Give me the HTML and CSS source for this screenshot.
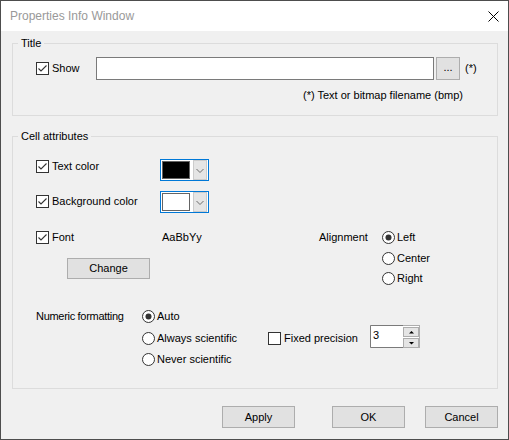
FILE: index.html
```html
<!DOCTYPE html>
<html lang="en">
<head>
<meta charset="utf-8">
<title>Properties Info Window</title>
<link rel="stylesheet" href="styles.css">
</head>
<body>
<div class="window">
  <div class="titlebar">
    <span class="title">Properties Info Window</span>
    <svg class="close" width="11" height="11" viewBox="0 0 11 11"><path d="M0.5 0.5 L10.5 10.5 M10.5 0.5 L0.5 10.5" stroke="#000" stroke-width="1" fill="none"/></svg>
  </div>

  <div class="content">
    <div class="group title-group">
      <span class="group-label">Title</span>
      <div class="show-row">
        <label class="check show-check">
          <span class="box"><svg width="11" height="11" viewBox="0 0 11 11"><polyline points="1.5,5.5 4,8 9.5,2.5" fill="none" stroke="#333" stroke-width="1.1"/></svg></span>
          <span>Show</span>
        </label>
        <div class="textfield"></div>
        <div class="btn browse">...</div>
        <span class="footnote">(*)</span>
      </div>
      <div class="note">(*) Text or bitmap filename (bmp)</div>
    </div>

    <div class="group cell-group">
      <span class="group-label">Cell attributes</span>

      <div class="color-row">
        <label class="check">
          <span class="box"><svg width="11" height="11" viewBox="0 0 11 11"><polyline points="1.5,5.5 4,8 9.5,2.5" fill="none" stroke="#333" stroke-width="1.1"/></svg></span>
          <span>Text color</span>
        </label>
        <div class="combo">
          <span class="swatch swatch-black"></span>
          <span class="drop"><svg width="12" height="18" viewBox="0 0 12 18"><polyline points="2.5,8 6,11.5 9.5,8" fill="none" stroke="#6d6d6d" stroke-width="1"/></svg></span>
        </div>
      </div>

      <div class="color-row bg-row">
        <label class="check">
          <span class="box"><svg width="11" height="11" viewBox="0 0 11 11"><polyline points="1.5,5.5 4,8 9.5,2.5" fill="none" stroke="#333" stroke-width="1.1"/></svg></span>
          <span>Background color</span>
        </label>
        <div class="combo">
          <span class="swatch swatch-white"></span>
          <span class="drop"><svg width="12" height="18" viewBox="0 0 12 18"><polyline points="2.5,8 6,11.5 9.5,8" fill="none" stroke="#6d6d6d" stroke-width="1"/></svg></span>
        </div>
      </div>

      <div class="font-block">
        <div class="font-col">
          <label class="check">
            <span class="box"><svg width="11" height="11" viewBox="0 0 11 11"><polyline points="1.5,5.5 4,8 9.5,2.5" fill="none" stroke="#333" stroke-width="1.1"/></svg></span>
            <span>Font</span>
          </label>
          <div class="btn change">Change</div>
        </div>
        <div class="sample">AaBbYy</div>
        <div class="align-label">Alignment</div>
        <div class="radio-list align-list">
          <label class="radio"><svg width="13" height="13" viewBox="0 0 13 13"><circle cx="6.5" cy="6.5" r="6" fill="#fff" stroke="#333"/><circle cx="6.5" cy="6.5" r="3" fill="#333"/></svg><span>Left</span></label>
          <label class="radio"><svg width="13" height="13" viewBox="0 0 13 13"><circle cx="6.5" cy="6.5" r="6" fill="#fff" stroke="#333"/></svg><span>Center</span></label>
          <label class="radio"><svg width="13" height="13" viewBox="0 0 13 13"><circle cx="6.5" cy="6.5" r="6" fill="#fff" stroke="#333"/></svg><span>Right</span></label>
        </div>
      </div>

      <div class="numeric-block">
        <div class="numeric-label">Numeric formatting</div>
        <div class="radio-list numeric-list">
          <label class="radio"><svg width="13" height="13" viewBox="0 0 13 13"><circle cx="6.5" cy="6.5" r="6" fill="#fff" stroke="#333"/><circle cx="6.5" cy="6.5" r="3" fill="#333"/></svg><span>Auto</span></label>
          <label class="radio"><svg width="13" height="13" viewBox="0 0 13 13"><circle cx="6.5" cy="6.5" r="6" fill="#fff" stroke="#333"/></svg><span>Always scientific</span></label>
          <label class="radio"><svg width="13" height="13" viewBox="0 0 13 13"><circle cx="6.5" cy="6.5" r="6" fill="#fff" stroke="#333"/></svg><span>Never scientific</span></label>
        </div>
        <div class="precision">
          <label class="check precision-check">
            <span class="box"></span>
            <span>Fixed precision</span>
          </label>
          <div class="spin">
            <div class="spin-value">3</div>
            <div class="spin-buttons">
              <span class="spin-btn"><svg width="13" height="8" viewBox="0 0 13 8"><polygon points="4,5.5 9,5.5 6.5,3" fill="#000"/></svg></span>
              <span class="spin-btn"><svg width="13" height="8" viewBox="0 0 13 8"><polygon points="4,3 9,3 6.5,5.5" fill="#000"/></svg></span>
            </div>
          </div>
        </div>
      </div>
    </div>

    <div class="actions">
      <div class="btn action apply">Apply</div>
      <div class="btn action ok">OK</div>
      <div class="btn action">Cancel</div>
    </div>
  </div>
</div>
</body>
</html>
```

FILE: styles.css
```css
* {
  box-sizing: border-box;
}

html,
body {
  margin: 0;
}

body {
  width: 509px;
  height: 440px;
  font: 11px/13px "Liberation Sans", Arial, sans-serif;
  color: #000;
  background: #f0f0f0;
}

/* dialog frame */
.window {
  width: 509px;
  height: 440px;
  border: 1px solid #4d4d4d;
  display: flex;
  flex-direction: column;
  background: #f0f0f0;
}

.titlebar {
  flex: none;
  height: 30px;
  background: #fff;
  display: flex;
  align-items: center;
  padding-left: 9px;
}

.title {
  flex: 1;
  font: 12px/16px "Liberation Sans", Arial, sans-serif;
  color: #999;
}

.close {
  margin-right: 9px;
}

.content {
  flex: 1;
  padding: 12px 10px 0 11px;
}

/* group boxes */
.group {
  position: relative;
  border: 1px solid #dcdcdc;
}

.group-label {
  position: absolute;
  top: -7px;
  left: 5px;
  padding: 0 3px;
  line-height: 13px;
  background: #f0f0f0;
}

.title-group {
  height: 73px;
  padding: 13px 0 0 23px;
}

.cell-group {
  height: 253px;
  margin-top: 20px;
  padding: 22px 0 0 23px;
}

/* checkbox / radio */
.check {
  display: flex;
  align-items: center;
  gap: 3px;
}

.box {
  flex: none;
  width: 13px;
  height: 13px;
  border: 1px solid #333;
  background: #fff;
}

.box svg {
  display: block;
}

.radio {
  display: flex;
  align-items: center;
  gap: 2px;
  height: 13px;
}

.radio svg {
  flex: none;
  display: block;
}

/* title row */
.show-row {
  display: flex;
  align-items: center;
  height: 23px;
}

.show-check {
  width: 60px;
}

.textfield {
  width: 338px;
  height: 23px;
  border: 1px solid #7a7a7a;
  background: #fff;
}

.btn {
  display: flex;
  align-items: center;
  justify-content: center;
  background: #e1e1e1;
  border: 1px solid #adadad;
}

.browse {
  width: 24px;
  height: 23px;
  margin-left: 2px;
  padding-bottom: 2px;
}

.footnote {
  margin-left: 5px;
}

.note {
  margin-top: 9px;
  padding-left: 267px;
}

/* colour pickers */
.color-row {
  display: flex;
  align-items: flex-start;
  height: 22px;
}

.color-row .check {
  width: 124px;
  margin-top: 1px;
}

.bg-row {
  margin-top: 10px;
}

.bg-row .check {
  margin-top: 4px;
}

.combo {
  display: flex;
  width: 49px;
  height: 22px;
  border: 1px solid #0078d7;
  background: #fff;
}

.swatch {
  width: 28px;
  height: 18px;
  margin: 1px 0 0 1px;
  border: 1px solid #646464;
}

.swatch-black {
  background: #000;
}

.swatch-white {
  background: #fff;
}

.drop {
  display: flex;
  align-items: center;
  justify-content: center;
  width: 14px;
  height: 20px;
  margin-left: auto;
  margin-right: 1px;
  background: #e5e5e5;
  border: 1px solid #cccccc;
}

/* font + alignment */
.font-block {
  display: flex;
  align-items: flex-start;
  height: 54px;
  margin-top: 18px;
}

.font-col {
  width: 124px;
}

.change {
  width: 83px;
  height: 21px;
  margin: 14px 0 0 31px;
}

.sample {
  width: 159px;
  padding-left: 2px;
}

.align-label {
  width: 63px;
}

.radio-list {
  display: flex;
  flex-direction: column;
}

.align-list {
  gap: 7.5px;
}

/* numeric formatting */
.numeric-block {
  display: flex;
  align-items: flex-start;
  margin-top: 25px;
}

.numeric-label {
  width: 106px;
  letter-spacing: -0.3px;
}

.numeric-list {
  width: 126px;
  gap: 8.5px;
}

.precision {
  display: flex;
  align-items: flex-start;
  margin-top: 15px;
}

.precision-check {
  width: 102px;
  margin-top: 7px;
}

.spin {
  display: flex;
  width: 50px;
  height: 23px;
  background: #fff;
  border: 1px solid #adadad;
  border-left-color: #7a7a7a;
}

.spin-value {
  flex: 1;
  padding: 3px 0 0 2px;
  border-top: 1px solid #7a7a7a;
  border-bottom: 1px solid #7a7a7a;
  margin: -1px 0;
  height: 23px;
  color: #000;
}

.spin-buttons {
  display: flex;
  flex-direction: column;
  gap: 1px;
  padding: 1px 0 0 0;
  width: 16px;
}

.spin-btn {
  display: flex;
  align-items: center;
  justify-content: center;
  height: 10px;
  background: #e5e5e5;
  border: 1px solid #adadad;
}

/* dialog buttons */
.actions {
  display: flex;
  justify-content: flex-end;
  margin-top: 17px;
}

.action {
  width: 73px;
  height: 22px;
}

.apply {
  margin-right: 37px;
}

.ok {
  margin-right: 20px;
}
```
